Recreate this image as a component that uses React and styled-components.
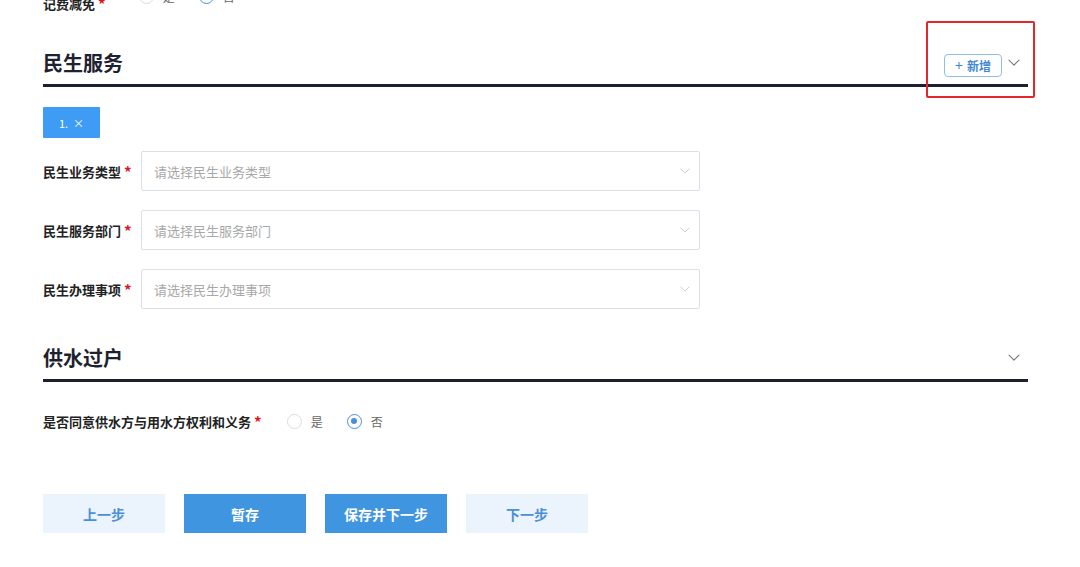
import React from 'react';
import styled, {createGlobalStyle} from "styled-components";

const GlobalStyle = createGlobalStyle`
  html, body {
    margin: 0;
    padding: 0;
    background: #fff;
    overflow: hidden;
  }
  body {
    font-family: "Noto Sans CJK SC", "Noto Sans", sans-serif;
    color: #222;
  }
`

const Chevron = ({color = "#999", size = 12}) => (
    <svg width={size} height={size * 0.6} viewBox="0 0 12 7" fill="none">
        <path d="M1 1l5 5 5-5" stroke={color} strokeWidth="1.1" strokeLinecap="round" strokeLinejoin="round"/>
    </svg>
)

const Radio = ({checked, label}) => (
    <RadioItem>
        <RadioCircle checked={checked}/>
        <RadioText>{label}</RadioText>
    </RadioItem>
)

const SelectField = ({label, placeholder}) => (
    <FormRow>
        <Label>{label}<Star>*</Star></Label>
        <SelectBox>
            <Placeholder>{placeholder}</Placeholder>
            <Chevron color="#c8c8c8" size={10}/>
        </SelectBox>
    </FormRow>
)

const App = () => {
    return (
        <>
            <GlobalStyle/>
            <Page>
                <TopRow>
                    <Label>记费减免<Star>*</Star></Label>
                    <RadioGroup raised>
                        <Radio label="是"/>
                        <Radio checked label="否"/>
                    </RadioGroup>
                </TopRow>

                <SectionHeader>
                    <SectionTitle>民生服务</SectionTitle>
                    <HeaderActions>
                        <AddButton><span>+</span>新增</AddButton>
                        <Chevron color="#777"/>
                    </HeaderActions>
                    <Annotation/>
                </SectionHeader>

                <Tab>1.&nbsp;&nbsp;×</Tab>

                <FormList>
                    <SelectField label="民生业务类型" placeholder="请选择民生业务类型"/>
                    <SelectField label="民生服务部门" placeholder="请选择民生服务部门"/>
                    <SelectField label="民生办理事项" placeholder="请选择民生办理事项"/>
                </FormList>

                <SectionHeader second>
                    <SectionTitle>供水过户</SectionTitle>
                    <HeaderActions>
                        <Chevron color="#777"/>
                    </HeaderActions>
                </SectionHeader>

                <AgreeRow>
                    <Label>是否同意供水方与用水方权利和义务<Star>*</Star></Label>
                    <RadioGroup>
                        <Radio label="是"/>
                        <Radio checked label="否"/>
                    </RadioGroup>
                </AgreeRow>

                <ButtonBar>
                    <StepButton>上一步</StepButton>
                    <StepButton primary>暂存</StepButton>
                    <StepButton primary>保存并下一步</StepButton>
                    <StepButton>下一步</StepButton>
                </ButtonBar>
            </Page>
        </>
    )
}

export default App

const Page = styled.div`
  width: 1080px;
  height: 567px;
  box-sizing: border-box;
  padding: 0 52px 0 43px;
  overflow: hidden;
`

const TopRow = styled.div`
  margin-top: -17px;
  height: 40px;
  display: flex;
  align-items: center;
`

const Label = styled.div`
  font-size: 13px;
  font-weight: 700;
  color: #222;
  white-space: nowrap;
  display: flex;
  align-items: center;
`

const Star = styled.span`
  color: #e0161e;
  margin-left: 3px;
  font-size: 15px;
`

const RadioGroup = styled.div`
  display: flex;
  align-items: center;
  gap: 24px;
  margin-left: ${({raised}) => raised ? "33px" : "25px"};
  margin-bottom: ${({raised}) => raised ? "14px" : "0"};
`

const RadioItem = styled.div`
  display: flex;
  align-items: center;
  gap: 9px;
`

const RadioCircle = styled.span`
  width: 15px;
  height: 15px;
  border-radius: 50%;
  box-sizing: border-box;
  border: 1px solid ${({checked}) => checked ? "#4a90d9" : "#dcdcdc"};
  display: flex;
  align-items: center;
  justify-content: center;

  &::after {
    content: "";
    width: 6px;
    height: 6px;
    border-radius: 50%;
    background: #4a90d9;
    display: ${({checked}) => checked ? "block" : "none"};
  }
`

const RadioText = styled.span`
  font-size: 12px;
  color: #666;
`

const SectionHeader = styled.div`
  position: relative;
  margin-top: ${({second}) => second ? "34px" : "25px"};
  height: 39px;
  box-sizing: border-box;
  padding-bottom: 7px;
  border-bottom: 3px solid #1b2130;
  display: flex;
  align-items: center;
  justify-content: space-between;
`

const SectionTitle = styled.div`
  font-size: 20px;
  font-weight: 700;
  color: #1d2230;
`

const HeaderActions = styled.div`
  display: flex;
  align-items: center;
  gap: 6px;
  padding-right: 8px;
`

const AddButton = styled.div`
  margin-top: 5px;
  width: 58px;
  height: 23px;
  box-sizing: border-box;
  border: 1px solid #8fbdec;
  border-radius: 4px;
  display: flex;
  align-items: center;
  justify-content: center;
  gap: 4px;
  font-size: 12px;
  font-weight: 700;
  color: #3f87d4;

  span {
    font-size: 14px;
    font-weight: 400;
    line-height: 1;
  }
`

const Annotation = styled.div`
  position: absolute;
  left: 883px;
  top: -27px;
  width: 109px;
  height: 77px;
  box-sizing: border-box;
  border: 2px solid #e3272a;
  border-radius: 2px;
  pointer-events: none;
`

const Tab = styled.div`
  margin-top: 20px;
  width: 57px;
  height: 31px;
  background: #3e9cf4;
  color: #fff;
  font-size: 11px;
  display: flex;
  align-items: center;
  justify-content: center;
  border-radius: 1px;
`

const FormList = styled.div`
  margin-top: 13px;
  display: flex;
  flex-direction: column;
  gap: 19px;
`

const FormRow = styled.div`
  display: flex;
  align-items: center;
  height: 40px;

  ${Label} {
    width: 98px;
  }
`

const SelectBox = styled.div`
  width: 559px;
  height: 40px;
  box-sizing: border-box;
  border: 1px solid #dcdfe6;
  border-radius: 2px;
  padding: 0 9px 0 12px;
  display: flex;
  align-items: center;
  justify-content: space-between;
`

const Placeholder = styled.span`
  font-size: 13px;
  color: #a8a8a8;
`

const AgreeRow = styled.div`
  margin-top: 24px;
  height: 30px;
  display: flex;
  align-items: center;
`

const ButtonBar = styled.div`
  margin-top: 58px;
  display: flex;
  gap: 19px;
`

const StepButton = styled.div`
  width: 122px;
  height: 39px;
  display: flex;
  align-items: center;
  justify-content: center;
  font-size: 14px;
  font-weight: 700;
  background: ${({primary}) => primary ? "#3f95e0" : "#ebf3fc"};
  color: ${({primary}) => primary ? "#fff" : "#4b8fd8"};
`
